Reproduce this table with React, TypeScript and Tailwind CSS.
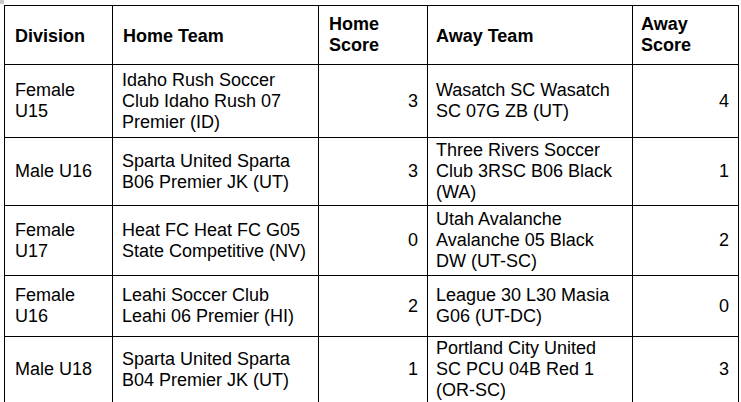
import React from "react";

type Row = { div: string[]; home: string[]; hs: string; away: string[]; as: string; h: string };

const rows: Row[] = [
  { div: ["Female", "U15"], home: ["Idaho Rush Soccer", "Club Idaho Rush 07", "Premier (ID)"], hs: "3", away: ["Wasatch SC Wasatch", "SC 07G ZB (UT)"], as: "4", h: "h-[73px]" },
  { div: ["Male U16"], home: ["Sparta United Sparta", "B06 Premier JK (UT)"], hs: "3", away: ["Three Rivers Soccer", "Club 3RSC B06 Black", "(WA)"], as: "1", h: "h-[68px]" },
  { div: ["Female", "U17"], home: ["Heat FC Heat FC G05", "State Competitive (NV)"], hs: "0", away: ["Utah Avalanche", "Avalanche 05 Black", "DW (UT-SC)"], as: "2", h: "h-[70px]" },
  { div: ["Female", "U16"], home: ["Leahi Soccer Club", "Leahi 06 Premier (HI)"], hs: "2", away: ["League 30 L30 Masia", "G06 (UT-DC)"], as: "0", h: "h-[61px]" },
  { div: ["Male U18"], home: ["Sparta United Sparta", "B04 Premier JK (UT)"], hs: "1", away: ["Portland City United", "SC PCU 04B Red 1", "(OR-SC)"], as: "3", h: "h-[66px]" },
];

function Lines({ l }: { l: string[] }) {
  return (
    <>
      {l.map((t, i) => (
        <div key={i} className="whitespace-nowrap">{t}</div>
      ))}
    </>
  );
}

export default function App() {
  return (
    <div
      className="relative w-[741px] h-[402px] overflow-hidden bg-white text-black"
      style={{ fontFamily: '"Liberation Sans", Arial, sans-serif' }}
    >
      <div className="absolute left-0 top-0 w-[4px] h-[4px] bg-[#c8c8c8]" />
      <table className="ml-[4px] mt-[5px] table-fixed border-collapse text-[18px] leading-[21px]">
        <colgroup>
          <col className="w-[108px]" />
          <col className="w-[206px]" />
          <col className="w-[109px]" />
          <col className="w-[205px]" />
          <col className="w-[106px]" />
        </colgroup>
        <thead>
          <tr className="h-[59px] font-bold">
            <th className="border border-black pl-[10px] pr-[9px] pt-[2px] text-left align-middle">Division</th>
            <th className="border border-black pl-[10px] pr-[9px] pt-[2px] text-left align-middle">Home Team</th>
            <th className="border border-black pl-[10px] pr-[9px] text-left align-middle">
              <div>Home</div>
              <div>Score</div>
            </th>
            <th className="border border-black pl-[8px] pr-[9px] pt-[2px] text-left align-middle">Away Team</th>
            <th className="border border-black pl-[8px] pr-[9px] text-left align-middle">
              <div>Away</div>
              <div>Score</div>
            </th>
          </tr>
        </thead>
        <tbody>
          {rows.map((r, i) => (
            <tr key={i} className={r.h}>
              <td className="border border-black pl-[10px] pr-[4px] align-middle"><Lines l={r.div} /></td>
              <td className="border border-black pl-[9px] pr-[4px] align-middle"><Lines l={r.home} /></td>
              <td className="border border-black px-[9px] text-right align-middle">{r.hs}</td>
              <td className="border border-black pl-[8px] pr-[4px] align-middle"><Lines l={r.away} /></td>
              <td className="border border-black px-[9px] text-right align-middle">{r.as}</td>
            </tr>
          ))}
        </tbody>
      </table>
    </div>
  );
}
